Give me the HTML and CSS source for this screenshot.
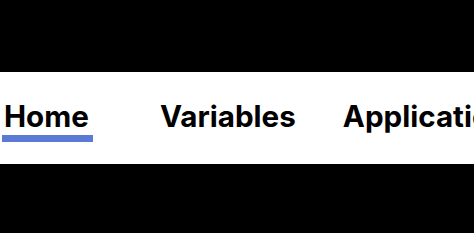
FILE: index.html
```html
<!DOCTYPE html>
<html>
<head>
<meta charset="utf-8">
<link rel="stylesheet" href="styles.css">
</head>
<body>
<nav class="tabs">
  <a class="tab tab-active" href="#">Home</a>
  <a class="tab tab-vars" href="#">Variables</a>
  <a class="tab tab-apps" href="#">Applications</a>
</nav>
</body>
</html>
```
FILE: styles.css
```css
html, body {
  margin: 0;
  padding: 0;
  background: #000;
  width: 474px;
  height: 233px;
  overflow: hidden;
}
.tabs {
  margin-top: 72px;
  height: 92px;
  background: #fff;
  display: flex;
  align-items: flex-start;
  overflow: hidden;
  white-space: nowrap;
}
.tab {
  font-family: Inter, "Liberation Sans", sans-serif;
  font-weight: 700;
  font-size: 29.6px;
  line-height: 34px;
  color: #000;
  text-decoration: none;
  padding: 27px 4px 0;
  height: 46px;
  box-sizing: content-box;
  flex-shrink: 0;
}
.tab-active {
  margin-left: 2px;
  padding-left: 2px;
  padding-right: 4px;
  border-bottom: 7px solid #5a7bd5;
  height: 34px;
  padding-bottom: 2px;
}
.tab-vars {
  margin-left: 63px;
}
.tab-apps {
  margin-left: 39px;
}
```
